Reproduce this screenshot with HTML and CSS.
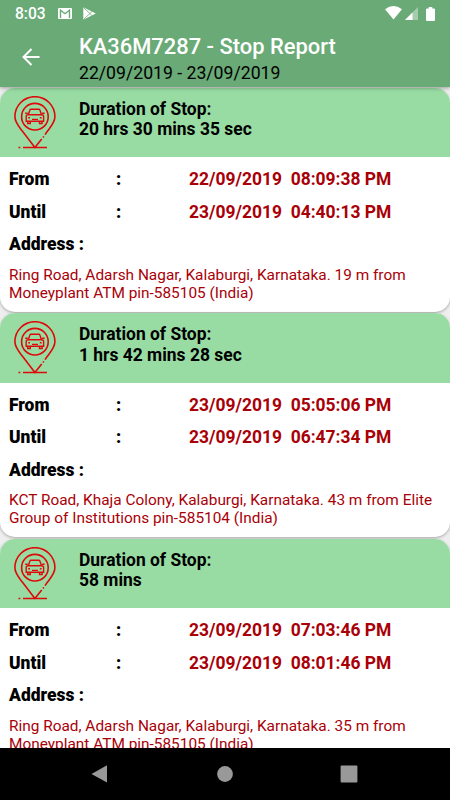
FILE: index.html
```html
<!DOCTYPE html>
<html lang="en">
<head>
<meta charset="utf-8">
<title>Stop Report</title>
<link rel="stylesheet" href="styles.css">
</head>
<body>
<svg width="0" height="0" class="defs">
  <symbol id="pin" viewBox="0 0 42 54">
    <g fill="none" stroke="#df0909" stroke-width="1.6">
      <path d="M31 38.6 33.7 34.8C37 30.5 40.9 26 40.9 20.7a20 20 0 0 0-40 0c0 5.3 3.9 9.8 7.2 14.1L20.9 51.5l6.8-8.5M29 41.5l.8-1.1M9 51.5h24M4.5 51.5h1.8"/>
      <circle cx="20.9" cy="20.7" r="13.3"/>
      <path d="M14.3 18.7l1.5-4.5q.3-1 1.3-1h7.6q1 0 1.3 1l1.5 4.5M11.2 17.3h2.5M28.1 17.3h2.5M14 18.7h13.8q1.8 0 1.8 1.8v4.8H12.2v-4.8q0-1.8 1.8-1.8zM13.7 25.3v2.2h2.6v-2.2M25.5 25.3v2.2h2.6v-2.2M18 23.4h6M14.2 21.7h1.8M25.8 21.7h1.8" stroke-width="1.4"/>
    </g>
  </symbol>
</svg>
<div class="screen">
  <header class="top">
    <div class="status">
      <span class="clock">8:03</span>
      <svg class="mail" viewBox="0 0 14 11"><rect width="14" height="11" rx="1" fill="#fff"/><path d="M2.5 10V2.2L7 5.7l4.5-3.5V10" fill="none" stroke="#69aa76" stroke-width="1.4"/></svg>
      <svg class="play" viewBox="0 0 13 13"><path d="M.3.2v12.6L12.8 6.5z" fill="#fff"/><path d="M.5.5l9 8.5M.5 12.5l9-8.5" stroke="#69aa76" stroke-width=".8"/></svg>
      <svg class="wifi" viewBox="0 0 17 14"><path d="M0 3.2Q8.5-3 17 3.2L8.5 13.5z" fill="#fff"/></svg>
      <svg class="signal" viewBox="0 0 13 13"><path d="M0 13 13 0v13z" fill="#a5cdad"/><path d="M0 13 7.5 5.5V13z" fill="#fff"/></svg>
      <svg class="battery" viewBox="0 0 9 14"><path d="M2.7 0h3.6v1.4H8q1 0 1 1V13q0 1-1 1H1q-1 0-1-1V2.4q0-1 1-1h1.7z" fill="#fff"/></svg>
    </div>
    <div class="bar">
      <svg class="back" viewBox="0 0 18 18"><path d="M17.5 9H1.5M9.5 1 1.5 9l8 8" fill="none" stroke="#fff" stroke-width="2"/></svg>
      <div>
        <h1>KA36M7287 - Stop Report</h1>
        <p class="range">22/09/2019 - 23/09/2019</p>
      </div>
    </div>
  </header>
  <main class="list">
    <article class="card">
      <div class="head"><svg class="pin"><use href="#pin"/></svg><div>Duration of Stop:<br>20 hrs 30 mins 35 sec</div></div>
      <div class="row"><b>From</b><b>:</b><span>22/09/2019&nbsp; 08:09:38 PM</span></div>
      <div class="row"><b>Until</b><b>:</b><span>23/09/2019&nbsp; 04:40:13 PM</span></div>
      <div class="row"><b>Address :</b></div>
      <p class="address">Ring Road, Adarsh Nagar, Kalaburgi, Karnataka. 19 m from<br>Moneyplant ATM pin-585105 (India)</p>
    </article>
    <article class="card">
      <div class="head"><svg class="pin"><use href="#pin"/></svg><div>Duration of Stop:<br>1 hrs 42 mins 28 sec</div></div>
      <div class="row"><b>From</b><b>:</b><span>23/09/2019&nbsp; 05:05:06 PM</span></div>
      <div class="row"><b>Until</b><b>:</b><span>23/09/2019&nbsp; 06:47:34 PM</span></div>
      <div class="row"><b>Address :</b></div>
      <p class="address">KCT Road, Khaja Colony, Kalaburgi, Karnataka. 43 m from Elite<br>Group of Institutions pin-585104 (India)</p>
    </article>
    <article class="card">
      <div class="head"><svg class="pin"><use href="#pin"/></svg><div>Duration of Stop:<br>58 mins</div></div>
      <div class="row"><b>From</b><b>:</b><span>23/09/2019&nbsp; 07:03:46 PM</span></div>
      <div class="row"><b>Until</b><b>:</b><span>23/09/2019&nbsp; 08:01:46 PM</span></div>
      <div class="row"><b>Address :</b></div>
      <p class="address">Ring Road, Adarsh Nagar, Kalaburgi, Karnataka. 35 m from<br>Moneyplant ATM pin-585105 (India)</p>
    </article>
  </main>
  <nav class="nav">
    <svg viewBox="0 0 18 18"><path d="M16 .2v17.4L.5 9z"/></svg>
    <svg viewBox="0 0 18 18"><circle cx="9" cy="9" r="7.9"/></svg>
    <svg viewBox="0 0 18 18"><rect x=".6" y=".6" width="16.8" height="16.8" rx="1"/></svg>
  </nav>
</div>
</body>
</html>
```
FILE: styles.css
```css
* { box-sizing: border-box; }
body { margin: 0; font-family: Roboto, sans-serif; color: #000; }
h1, p { margin: 0; }
svg { display: block; flex: none; }
.defs { position: absolute; }
.screen { width: 450px; height: 800px; display: flex; flex-direction: column; overflow: hidden; background: #eee; }
.top { position: relative; z-index: 1; height: 87px; flex: none; background: #69aa76; box-shadow: 0 1px 4px rgba(0,0,0,.35); }
.status { height: 27px; display: flex; align-items: center; padding: 0 15.5px 0 15px; color: #fff; }
.clock { width: 43px; font-size: 15.6px; font-weight: 500; line-height: 27px; padding-top: 1px; }
.mail { width: 14px; height: 11px; }
.play { width: 13px; height: 13px; margin-left: 11px; }
.wifi { width: 17px; height: 14px; margin-left: auto; margin-top: -1px; }
.signal { width: 13px; height: 13px; margin-left: 3px; }
.battery { width: 9px; height: 14px; margin-left: 7.5px; }
.bar { display: flex; padding-left: 22px; }
.back { width: 18px; height: 18px; margin: 21px 39px 0 0; }
h1 { margin-top: 6px; font-size: 21.9px; font-weight: 500; line-height: 27px; color: #fff; white-space: nowrap; }
.range { font-size: 17.65px; line-height: 26px; white-space: nowrap; }
.list { flex: 1; min-height: 0; overflow: hidden; padding-top: .5px; }
.card { height: 224px; margin-bottom: 1.5px; border-radius: 15px; overflow: hidden; background: #fff; box-shadow: 0 1px 3px rgba(0,0,0,.3); }
.head { height: 69.5px; display: flex; padding: 8px 0 0 14px; background: #98dca4; font-size: 17.45px; font-weight: 700; line-height: 20.6px; margin-bottom: 6.2px; }
.head div { padding-top: 3.3px; }
.pin { width: 42px; height: 54px; margin-right: 23px; }
.row { height: 32.5px; display: grid; grid-template-columns: 107px 73px 1fr; align-items: center; padding-left: 9px; font-size: 17.45px; font-weight: 700; white-space: nowrap; }
.row span { color: #a90008; }
.address { margin: 5.3px 0 0 9px; font-size: 15.4px; line-height: 18px; color: #a90008; white-space: nowrap; }
.nav { height: 52px; flex: none; background: #000; display: flex; padding: 17px 92px 0 91px; justify-content: space-between; fill: #999; }
.nav svg { width: 18px; height: 18px; }
```
